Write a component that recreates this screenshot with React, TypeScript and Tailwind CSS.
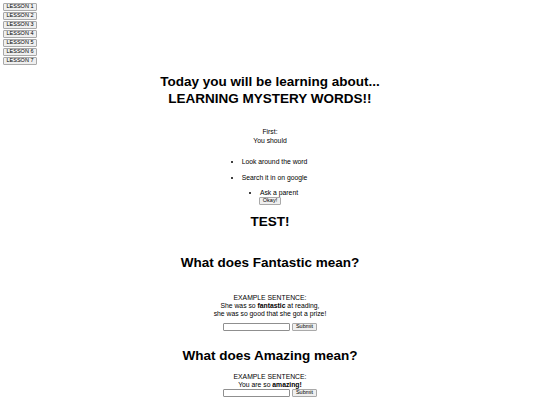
import React from "react";

const lessons = [1, 2, 3, 4, 5, 6, 7];

function Btn({ children, className = "" }: { children: React.ReactNode; className?: string }) {
  return (
    <button
      className={`flex items-center justify-center h-[8px] whitespace-nowrap bg-[#efefef] border border-[#a9a9a9] rounded-[1px] text-[5.5px] leading-none text-black ${className}`}
    >
      {children}
    </button>
  );
}

function Question({ word, sentence }: { word: string; sentence: React.ReactNode }) {
  return (
    <div className="flex flex-col items-center">
      <h1 className="text-[13.5px] leading-[17px] font-bold">What does {word} mean?</h1>
      {sentence}
    </div>
  );
}

function AnswerRow() {
  return (
    <div className="flex items-center gap-[2px]">
      <input className="w-[67px] h-[8px] border border-[#8f8f8f] rounded-[1px] bg-white" />
      <Btn className="w-[25px]">Submit</Btn>
    </div>
  );
}

export default function App() {
  return (
    <div className="w-[540px] h-[405px] overflow-hidden bg-white text-black font-['Liberation_Sans',Arial,sans-serif]">
      {/* lesson buttons */}
      <div className="pt-[3px] pl-[3px] flex flex-col gap-[1px]">
        {lessons.map((n) => (
          <Btn key={n} className="w-[34px]">
            LESSON {n}
          </Btn>
        ))}
      </div>

      <div className="flex flex-col items-center text-center">
        <h1 className="mt-[8px] text-[13.5px] leading-[17px] font-bold">
          Today you will be learning about...
          <br />
          LEARNING MYSTERY WORDS!!
        </h1>

        <p className="mt-[20px] text-[6.8px] leading-[9px]">
          First:
          <br />
          You should
        </p>

        <ul className="mt-[12px] text-[6.8px] leading-[9px] text-left list-disc pl-[9px]">
          <li>Look around the word</li>
          <li className="mt-[7px]">Search it in on google</li>
        </ul>
        <ul className="mt-[6px] text-[6.8px] leading-[9px] text-left list-disc pl-[18px]">
          <li>Ask a parent</li>
        </ul>
        <Btn className="px-[3px]">Okay!</Btn>

        <h1 className="mt-[8px] text-[13.5px] leading-[17px] font-bold">TEST!</h1>

        <div className="mt-[24px]">
          <Question
            word="Fantastic"
            sentence={
              <p className="mt-[23px] text-[6.8px] leading-[8px]">
                EXAMPLE SENTENCE:
                <br />
                She was so <b>fantastic</b> at reading,
                <br />
                she was so good that she got a prize!
              </p>
            }
          />
          <div className="mt-[5px] flex justify-center">
            <AnswerRow />
          </div>
        </div>

        <div className="mt-[16px]">
          <Question
            word="Amazing"
            sentence={
              <p className="mt-[9px] text-[6.8px] leading-[8px]">
                EXAMPLE SENTENCE:
                <br />
                You are so <b>amazing!</b>
              </p>
            }
          />
          <div className="flex justify-center">
            <AnswerRow />
          </div>
        </div>
      </div>
    </div>
  );
}
